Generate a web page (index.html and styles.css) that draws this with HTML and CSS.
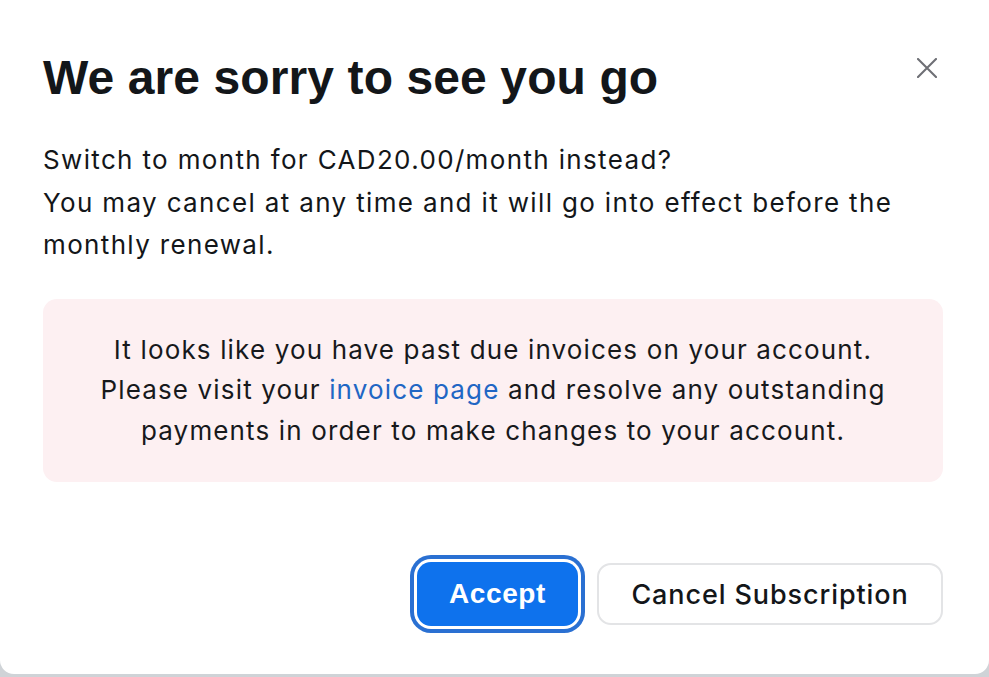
FILE: index.html
```html
<!DOCTYPE html>
<html lang="en">
<head>
<meta charset="utf-8">
<link rel="stylesheet" href="styles.css">
<title>Cancel</title>
</head>
<body>
<div class="dialog">
  <div class="header">
    <h1 class="title">We are sorry to see you go</h1>
    <button class="close" aria-label="Close">
      <svg width="20" height="20" viewBox="0 0 20 20"><path d="M1 1 L19 19 M19 1 L1 19" stroke="#6e6f75" stroke-width="2.1" fill="none" stroke-linecap="round"/></svg>
    </button>
  </div>
  <p class="body">Switch to month for CAD20.00/month instead?<br>You may cancel at any time and it will go into effect before the monthly renewal.</p>
  <div class="alert">It looks like you have past due invoices on your account. Please visit your <a href="#" class="link">invoice page</a> and resolve any outstanding payments in order to make changes to your account.</div>
  <div class="actions">
    <button class="btn primary">Accept</button>
    <button class="btn secondary">Cancel Subscription</button>
  </div>
</div>
</body>
</html>
```
FILE: styles.css
```css
html, body {
  margin: 0;
  padding: 0;
  background: #cfd3d7;
  height: 100%;
}
body {
  font-family: Inter, "Noto Sans", sans-serif;
  color: #131619;
}
.dialog {
  box-sizing: border-box;
  width: 989px;
  height: 674px;
  background: #fff;
  border-radius: 0 0 14px 14px;
  padding: 46px 46px 0 43px;
  display: flex;
  flex-direction: column;
}
.header {
  display: flex;
  justify-content: space-between;
  align-items: flex-start;
}
.title {
  margin: 0;
  font-family: "Liberation Sans", Arial, sans-serif;
  font-weight: 700;
  font-size: 48px;
  line-height: 64px;
  letter-spacing: 0.1px;
  color: #131619;
}
.close {
  border: 0;
  background: none;
  padding: 0;
  margin: 12px 6px 0 0;
  width: 20px;
  height: 20px;
  cursor: pointer;
}
.body {
  margin: 29px 0 0 0;
  font-size: 26px;
  line-height: 42.5px;
  letter-spacing: 1.35px;
  max-width: 860px;
}
.alert {
  margin-top: 32px;
  width: 900px;
  box-sizing: border-box;
  background: #fdf0f2;
  border-radius: 14px;
  padding: 31px 48px 31px;
  text-align: center;
  font-size: 26px;
  line-height: 40.5px;
  letter-spacing: 1.15px;
  color: #17191c;
}
.link {
  color: #2166c4;
  text-decoration: none;
}
.actions {
  display: flex;
  justify-content: flex-end;
  align-items: center;
  gap: 19px;
  margin-top: 80px;
  width: 900px;
}
.btn {
  box-sizing: border-box;
  height: 62px;
  border-radius: 14px;
  cursor: pointer;
}
.primary {
  width: 161px;
  height: 64px;
  background: #0e72ed;
  border: 0;
  color: #fff;
  font-family: "Liberation Sans", Arial, sans-serif;
  font-weight: 700;
  font-size: 28px;
  letter-spacing: 0.6px;
  box-shadow: 0 0 0 3px #fff, 0 0 0 7px #2a70d2;
}
.secondary {
  width: 346px;
  background: #fff;
  border: 2px solid #e3e4e6;
  color: #131619;
  font-family: Inter, "Noto Sans", sans-serif;
  font-weight: 500;
  font-size: 27px;
  letter-spacing: 0.9px;
}
```
